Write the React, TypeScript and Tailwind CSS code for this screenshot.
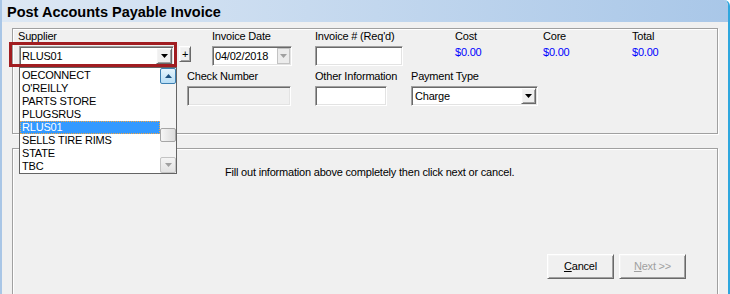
import React from "react";

const Down = ({ color = "#000" }: { color?: string }) => (
  <svg width="7" height="4" viewBox="0 0 7 4">
    <path d="M0 0H7L3.5 4Z" fill={color} />
  </svg>
);
const Up = ({ color = "#000" }: { color?: string }) => (
  <svg width="7" height="4" viewBox="0 0 7 4">
    <path d="M0 4H7L3.5 0Z" fill={color} />
  </svg>
);

const sunken =
  "border border-t-[#a0a0a0] border-l-[#a0a0a0] border-b-white border-r-white shadow-[inset_1px_1px_0_#696969,inset_-1px_-1px_0_#e3e3e3]";
const raised =
  "border border-t-white border-l-white border-b-[#696969] border-r-[#696969] shadow-[inset_1px_1px_0_#f4f4f4,inset_-1px_-1px_0_#a0a0a0] bg-[#f0f0f0]";
const etched =
  "border border-[#a0a0a0] shadow-[1px_1px_0_#ffffff,inset_1px_1px_0_#ffffff]";

const items = [
  "OECONNECT",
  "O'REILLY",
  "PARTS STORE",
  "PLUGSRUS",
  "RLUS01",
  "SELLS TIRE RIMS",
  "STATE",
  "TBC",
];

export default function App() {
  return (
    <div className="w-[730px] h-[294px] overflow-hidden flex flex-col bg-[#f0f0f0] border-l-2 border-l-[#a9c6e6] border-r-2 border-r-[#2fa7de] rounded-tr-[6px] text-[11px] tracking-[-0.2px] text-black font-['Liberation_Sans',Arial,sans-serif]">
      <div className="h-[22px] shrink-0 bg-gradient-to-r from-[#dde8f4] to-[#a9c7e8] pl-[5px] pt-[2px] leading-[20px] text-[14.5px] font-bold tracking-normal">
        Post Accounts Payable Invoice
      </div>
      <div className="flex-1 px-[10px] pt-[6px]">
        {/* Group 1 */}
        <div className={`${etched} h-[106px]`}>
          <div className="flex pt-[1px] pl-[5px] items-start">
            {/* Supplier */}
            <div className="flex flex-col">
              <div className="h-[13px] leading-[13px]">Supplier</div>
              <div className="flex mt-[3px] items-start">
                <div className="relative ml-[1px] w-[155px] h-[20px]">
                  <div className={`${sunken} bg-white w-full h-full flex items-center`}>
                    <span className="flex-1 pl-[2px] leading-[13px]">RLUS01</span>
                    <div className={`${raised} w-[16px] h-[16px] mr-[1px] flex items-center justify-center`}>
                      <Down />
                    </div>
                  </div>
                  <div className="absolute -left-[10px] -top-[4px] w-[168px] h-[25px] border-[3px] border-[#a11d21] z-10 pointer-events-none" />
                  <div className="absolute left-0 top-[21px] w-[158px] h-[107px] border border-[#646464] bg-white flex z-20">
                    <div className="w-[140px] pt-[1px]">
                      {items.map((it) => (
                        <div
                          key={it}
                          className={
                            it === "RLUS01"
                              ? "h-[13px] leading-[13px] pl-[2px] bg-[#3399ff] text-white outline-1 outline-dotted outline-[#f5a742] -outline-offset-1"
                              : "h-[13px] leading-[13px] pl-[2px]"
                          }
                        >
                          {it}
                        </div>
                      ))}
                    </div>
                    <div className="w-[16px] flex flex-col bg-[#f4f4f4]">
                      <div className="h-[16px] border border-[#3c7fb1] rounded-[2px] bg-gradient-to-b from-[#e5f4fc] to-[#b8def5] flex items-center justify-center">
                        <Up color="#1c5180" />
                      </div>
                      <div className="h-[44px]" />
                      <div className="h-[14px] border border-[#a6a6a6] rounded-[2px] bg-gradient-to-r from-[#f6f6f6] to-[#dcdcdc]" />
                      <div className="flex-1" />
                      <div className="h-[16px] border border-[#c3c3c3] rounded-[2px] bg-gradient-to-b from-[#f4f4f4] to-[#e2e2e2] flex items-center justify-center">
                        <Down color="#a0a0a0" />
                      </div>
                    </div>
                  </div>
                </div>
                <div className={`${raised} ml-[5px] w-[12px] h-[16px] flex items-center justify-center leading-none`}>
                  +
                </div>
              </div>
            </div>
            {/* Invoice Date */}
            <div className="flex flex-col ml-[21px]">
              <div className="h-[13px] leading-[13px]">Invoice Date</div>
              <div className={`${sunken} mt-[3px] w-[80px] h-[20px] bg-white flex items-center`}>
                <span className="flex-1 pl-[2px] leading-[13px]">04/02/2018</span>
                <div className="w-[13px] h-[16px] mr-[1px] border border-[#c3c3c3] bg-[#ececec] flex items-center justify-center">
                  <Down color="#a0a0a0" />
                </div>
              </div>
            </div>
            {/* Invoice # */}
            <div className="flex flex-col ml-[23px] w-[88px]">
              <div className="h-[13px] leading-[13px] whitespace-nowrap">Invoice # (Req'd)</div>
              <div className={`${sunken} mt-[3px] w-[88px] h-[20px] bg-white`} />
            </div>
            {/* Totals */}
            <div className="flex flex-col ml-[52px] w-[88px]">
              <div className="h-[13px] leading-[13px]">Cost</div>
              <div className="mt-[3px] h-[13px] leading-[13px] text-[#0000ff]">$0.00</div>
            </div>
            <div className="flex flex-col w-[89px]">
              <div className="h-[13px] leading-[13px]">Core</div>
              <div className="mt-[3px] h-[13px] leading-[13px] text-[#0000ff]">$0.00</div>
            </div>
            <div className="flex flex-col">
              <div className="h-[13px] leading-[13px]">Total</div>
              <div className="mt-[3px] h-[13px] leading-[13px] text-[#0000ff]">$0.00</div>
            </div>
          </div>
          {/* Row 2 */}
          <div className="flex mt-[4px] pl-[174px] items-start">
            <div className="flex flex-col w-[104px]">
              <div className="h-[13px] leading-[13px]">Check Number</div>
              <div className={`${sunken} mt-[3px] w-[104px] h-[20px] bg-[#f0f0f0]`} />
            </div>
            <div className="flex flex-col ml-[24px] w-[72px]">
              <div className="h-[13px] leading-[13px] whitespace-nowrap">Other Information</div>
              <div className={`${sunken} mt-[3px] w-[72px] h-[20px] bg-white`} />
            </div>
            <div className="flex flex-col ml-[24px] w-[127px]">
              <div className="h-[13px] leading-[13px]">Payment Type</div>
              <div className={`${sunken} mt-[3px] w-[127px] h-[20px] bg-white flex items-center`}>
                <span className="flex-1 pl-[3px] leading-[13px]">Charge</span>
                <div className={`${raised} w-[15px] h-[16px] mr-[1px] flex items-center justify-center`}>
                  <Down />
                </div>
              </div>
            </div>
          </div>
        </div>

        {/* Group 2 */}
        <div className={`${etched} mt-[14px] h-[200px] flex flex-col`}>
          <div className="mt-[17px] pl-[212px] h-[13px] leading-[13px] whitespace-nowrap">
            Fill out information above completely then click next or cancel.
          </div>
          <div className="flex justify-end pr-[31px] mt-[75px] gap-[5px]">
            <div className={`${raised} w-[67px] h-[25px] flex items-center justify-center leading-[13px]`}>
              <span>
                <span className="underline">C</span>ancel
              </span>
            </div>
            <div className={`${raised} w-[67px] h-[25px] flex items-center justify-center leading-[13px] text-[#a0a0a0]`}>
              <span>
                <span className="underline">N</span>ext &gt;&gt;
              </span>
            </div>
          </div>
        </div>
      </div>
    </div>
  );
}
